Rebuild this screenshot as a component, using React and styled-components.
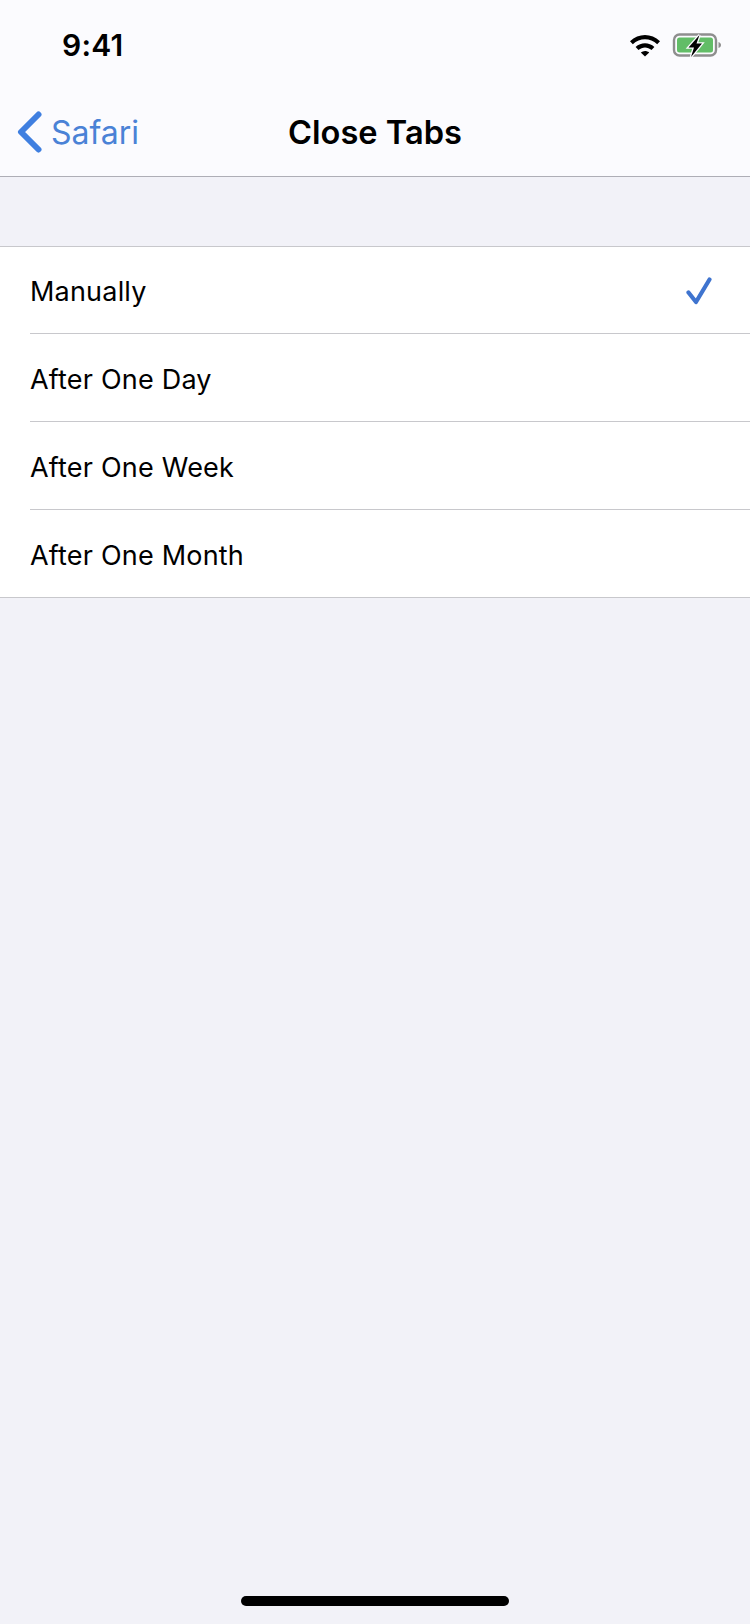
import styled, { createGlobalStyle } from 'styled-components';

const GlobalStyle = createGlobalStyle`
	html, body {
		margin: 0;
		padding: 0;
		background: #f2f2f8;
	}
	body {
		font-family: Inter, 'Liberation Sans', sans-serif;
		-webkit-font-smoothing: antialiased;
	}
`;

const Screen = styled.div`
	position: relative;
	width: 750px;
	height: 1624px;
	overflow: hidden;
	background: #f2f2f8;
`;

const Header = styled.header`
	height: 176px;
	background: #fbfbfe;
	border-bottom: 1px solid #aeaeb6;
`;

const StatusBar = styled.div`
	height: 88px;
	display: flex;
	align-items: center;
	justify-content: space-between;
	padding: 2px 28px 0 62px;
	box-sizing: border-box;
`;

const Clock = styled.span`
	font-size: 30px;
	font-weight: 600;
	letter-spacing: 0.2px;
	color: #000;
`;

const StatusIcons = styled.div`
	display: flex;
	align-items: center;
	gap: 11px;
`;

const NavBar = styled.nav`
	position: relative;
	height: 88px;
	display: flex;
	align-items: center;
	justify-content: center;
`;

const BackLink = styled.a`
	position: absolute;
	left: 17px;
	top: 0;
	height: 88px;
	display: flex;
	align-items: center;
	gap: 9px;
	color: #4a82d6;
	font-size: 32px;
`;

const Title = styled.h1`
	margin: 0;
	font-size: 32.6px;
	font-weight: 600;
	color: #000;
`;

const OptionList = styled.ul`
	list-style: none;
	margin: 69px 0 0;
	padding: 0;
	background: #fff;
	border-top: 1px solid #c8c8cc;
	border-bottom: 1px solid #c8c8cc;
`;

const Option = styled.li`
	height: 88px;
	box-sizing: border-box;
	margin-left: 30px;
	padding: 4px 38px 0 0;
	display: flex;
	align-items: center;
	justify-content: space-between;
	font-size: 27px;
	letter-spacing: 0.2px;
	color: #000;
	border-bottom: 1px solid #c8c8cc;

	&:first-child {
		height: 87px;
		padding-top: 2px;
	}

	&:last-child {
		height: 87px;
		padding-top: 3px;
		border-bottom: none;
	}
`;

const HomeIndicator = styled.div`
	position: absolute;
	left: 241px;
	bottom: 18px;
	width: 268px;
	height: 10px;
	border-radius: 5px;
	background: #000;
`;

const WifiIcon = () => (
	<svg width='32' height='24' viewBox='0 0 32 24'>
		<path d='M1 8.2C9.6 0 22.4 0 31 8.2L28.2 11.2C21.2 4.6 10.8 4.6 3.8 11.2Z' fill='#000' />
		<path d='M6.6 14C12 9 20 9 25.4 14L22.5 17C18.6 13.6 13.4 13.6 9.5 17Z' fill='#000' />
		<path d='M11.8 19.4C14.4 17.4 17.6 17.4 20.2 19.4L16 23.6Z' fill='#000' />
	</svg>
);

const BatteryIcon = () => (
	<svg width='50' height='26' viewBox='0 0 50 26'>
		<rect x='2' y='2.5' width='42' height='21' rx='5.5' fill='none' stroke='#8e8e8e' strokeWidth='2.4' />
		<rect x='5' y='5.5' width='36' height='15' rx='2.5' fill='#62bd67' />
		<path d='M46.5 10C48 10.5 49 11.5 49 13C49 14.5 48 15.5 46.5 16Z' fill='#8e8e8e' />
		<path d='M27.5 3L16.5 15.5H22L19 25L30 11.5H24.5Z' fill='#000' stroke='#fbfbfe' strokeWidth='2.6' paintOrder='stroke' />
	</svg>
);

const BackChevron = () => (
	<svg width='25' height='42' viewBox='0 0 25 42'>
		<path d='M21.5 3.5L4 21L21.5 38.5' fill='none' stroke='#3f7fe0' strokeWidth='6' strokeLinecap='round' strokeLinejoin='round' />
	</svg>
);

const CheckIcon = () => (
	<svg width='26' height='28' viewBox='0 0 26 28'>
		<path d='M2.5 15.5L10 25L23.5 2.5' fill='none' stroke='#3f74cf' strokeWidth='4.2' strokeLinecap='round' strokeLinejoin='round' />
	</svg>
);

const options = ['Manually', 'After One Day', 'After One Week', 'After One Month'];

export default function App() {
	return (
		<Screen>
			<GlobalStyle />
			<Header>
				<StatusBar>
					<Clock>9:41</Clock>
					<StatusIcons>
						<WifiIcon />
						<BatteryIcon />
					</StatusIcons>
				</StatusBar>
				<NavBar>
					<BackLink>
						<BackChevron />
						Safari
					</BackLink>
					<Title>Close Tabs</Title>
				</NavBar>
			</Header>
			<OptionList>
				{options.map((option, i) => (
					<Option key={option}>
						{option}
						{i === 0 && <CheckIcon />}
					</Option>
				))}
			</OptionList>
			<HomeIndicator />
		</Screen>
	);
}
